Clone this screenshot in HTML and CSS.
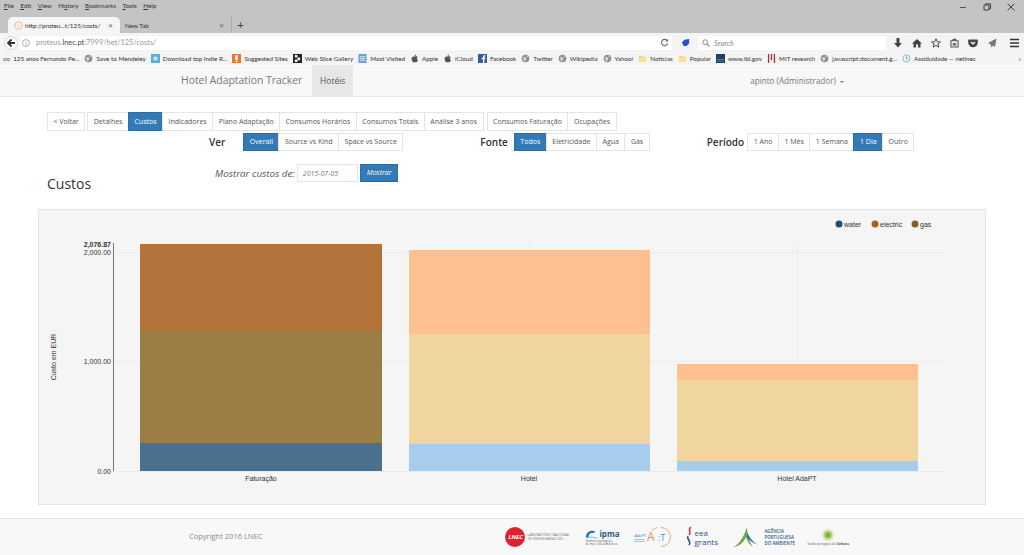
FILE: index.html
```html
<!DOCTYPE html>
<html lang="en">
<head>
    <meta charset="UTF-8">
    <title>Custos</title>
    <link rel="stylesheet" href="styles.css">
</head>
<body>
    <svg class="defs" width="0" height="0">
        <symbol id="globe" viewBox="0 0 10 10"><circle cx="5" cy="5" r="4.2" fill="#8a8f94"/><path d="M2 3.5h3l1 2-2 3-1-2zM6 1.5l2 1.5-1.500 1z" fill="#d8dcdf"/></symbol>
        <symbol id="folder" viewBox="0 0 10 10"><path d="M1 2h3l1 1h4v6H1z" fill="#f0cf6e"/><path d="M1 4h8v5H1z" fill="#f8e29a"/></symbol>
        <symbol id="apple" viewBox="0 0 10 10"><path d="M5 3c1-.7 3-.7 3.500.6-1.300.9-1 2.700.4 3.200C8.400 8.200 7.500 9.500 6.500 9.300c-.7-.2-1.200-.2-2 0C3 9.500 1.400 6.500 1.800 4.800 2.200 3 4 2.400 5 3zM5 2.600c0-1 .8-1.900 1.800-2 0 1-.8 1.900-1.800 2z" fill="#555"/></symbol>
    </svg>

    <div class="browser">
        <div class="menubar">
            <span><u>F</u>ile</span><span><u>E</u>dit</span><span><u>V</u>iew</span><span>Hi<u>s</u>tory</span><span><u>B</u>ookmarks</span><span><u>T</u>ools</span><span><u>H</u>elp</span>
            <div class="window-btns">
                <svg width="10" height="10" viewBox="0 0 10 10"><path d="M2 5.500h6" stroke="#555" stroke-width="1"/></svg>
                <svg width="10" height="10" viewBox="0 0 10 10"><path d="M2 3h5v5H2zM3.500 3V1.800h5v5H7" fill="none" stroke="#444" stroke-width="1"/></svg>
                <svg width="10" height="10" viewBox="0 0 10 10"><path d="M1.500 1.500l7 7M8.500 1.500l-7 7" stroke="#444" stroke-width="1"/></svg>
            </div>
        </div>
        <div class="tabstrip">
            <div class="tab tab-active">
                <svg width="9" height="9" viewBox="0 0 10 10"><circle cx="5" cy="5" r="4" fill="none" stroke="#f0c9a0" stroke-width="1.500"/><circle cx="5" cy="5" r="1.500" fill="#f4dcc4"/></svg>
                <span class="tab-title">http://proteu...t/125/costs/</span>
                <span class="tab-x">✕</span>
            </div>
            <div class="tab">
                <span class="tab-title">New Tab</span>
                <span class="tab-x">✕</span>
            </div>
            <span class="tab-plus">+</span>
        </div>
        <div class="toolbar">
            <svg class="back" width="14" height="14" viewBox="0 0 14 14"><circle cx="7" cy="7" r="6.500" fill="#fff" stroke="#d5d5d5"/><path d="M7.500 3.500L4 7l3.500 3.500M4.500 7H11" fill="none" stroke="#333" stroke-width="1.800"/></svg>
            <div class="urlbar">
                <svg width="8" height="8" viewBox="0 0 10 10"><circle cx="5" cy="5" r="4.300" fill="none" stroke="#999"/><path d="M5 4.500v3M5 2.500v1" stroke="#999"/></svg>
                <span class="url-text">proteus.<b>lnec.pt</b>:7999/het/125/costs/</span>
                <svg class="reload" width="9" height="9" viewBox="0 0 10 10"><path d="M8 3a3.500 3.500 0 1 0 .5 3" fill="none" stroke="#666" stroke-width="1.200"/><path d="M8.800 .8v3h-3z" fill="#666"/></svg>
            </div>
            <svg class="ext" width="9" height="9" viewBox="0 0 10 10"><path d="M1 5l3-3 5-1v5l-3 3H3z" fill="#2450c8"/></svg>
            <div class="searchbar">
                <svg width="8" height="8" viewBox="0 0 10 10"><circle cx="4" cy="4" r="3" fill="none" stroke="#888" stroke-width="1.200"/><path d="M6.500 6.500L9.500 9.500" stroke="#888" stroke-width="1.400"/></svg>
                <span>Search</span>
            </div>
            <div class="tool-icons">
                <svg width="10" height="10" viewBox="0 0 10 10"><path d="M3.500 0h3v5H9L5 9.500 1 5h2.500z" fill="#444"/></svg>
                <svg width="10" height="10" viewBox="0 0 10 10"><path d="M5 1L0 5.500h1.500V9.500h2.500V6.500h2v3h2.500V5.500H10z" fill="#444"/></svg>
                <svg width="10" height="10" viewBox="0 0 10 10"><path d="M5 .8l1.300 2.900 3.100.3-2.400 2 .8 3.100L5 7.500 2.200 9.100 3 6 .6 4l3.100-.3z" fill="none" stroke="#444"/></svg>
                <svg width="9" height="10" viewBox="0 0 10 10"><path d="M1 2.500h8v7H1zM3.500 2.500V1h3v1.500" fill="none" stroke="#555" stroke-width="1.200"/><path d="M3 5h4v3H3z" fill="#777"/></svg>
                <svg width="10" height="10" viewBox="0 0 10 10"><path d="M1 1.500h8a.8.8 0 0 1 .8.8v2.200a4.800 4.800 0 0 1-9.600 0V2.300a.8.8 0 0 1 .8-.8z" fill="#444"/><path d="M3 4l2 2 2-2" fill="none" stroke="#fff" stroke-width="1.200"/></svg>
                <svg width="10" height="10" viewBox="0 0 10 10"><path d="M9.500 .5L1 5l2.500 1.200L4.500 9.500 6 7.500l2 1.500z" fill="#777"/></svg>
                <svg class="burger" width="11" height="10" viewBox="0 0 11 10"><path d="M1 1.500h9M1 5h9M1 8.500h9" stroke="#333" stroke-width="1.600"/></svg>
            </div>
        </div>
        <div class="bookmarks">
            <span class="bm"><i class="glyph-oo">oo</i>125 anos Fernando Pe...</span>
            <span class="bm"><svg><use href="#globe"/></svg>Save to Mendeley</span>
            <span class="bm"><svg viewBox="0 0 10 10"><rect width="10" height="10" fill="#58b0d8"/><rect x="3" y="3" width="4" height="4" fill="#cfe8f4"/></svg>Download top Indie R...</span>
            <span class="bm"><svg viewBox="0 0 10 10"><rect width="10" height="10" fill="#e8792c"/><rect x="3.500" y="1.500" width="3" height="5" fill="#fff"/><rect x="4" y="7.500" width="2" height="1.500" fill="#fff"/></svg>Suggested Sites</span>
            <span class="bm"><svg viewBox="0 0 10 10"><rect width="10" height="10" fill="#222"/><path d="M2 1h3v3H2zM5 4h3v3H5zM2 6h3v3H2z" fill="#eee"/></svg>Web Slice Gallery</span>
            <span class="bm"><svg viewBox="0 0 10 10"><rect x=".5" width="9" height="10" fill="#6a9fd8"/><path d="M2 3h6M2 5h6M2 7h6" stroke="#e3effa"/></svg>Most Visited</span>
            <span class="bm"><svg><use href="#apple"/></svg>Apple</span>
            <span class="bm"><svg><use href="#apple"/></svg>iCloud</span>
            <span class="bm"><svg viewBox="0 0 10 10"><rect width="10" height="10" fill="#3b5a98"/><path d="M5.500 10V5.800H4.200V4.200h1.300V3.200C5.500 2 6.200 1.400 7.300 1.400h1v1.500h-.7c-.5 0-.6.200-.6.600v.7h1.300l-.2 1.600H7V10z" fill="#fff"/></svg>Facebook</span>
            <span class="bm"><svg><use href="#globe"/></svg>Twitter</span>
            <span class="bm"><svg><use href="#globe"/></svg>Wikipedia</span>
            <span class="bm"><svg><use href="#globe"/></svg>Yahoo!</span>
            <span class="bm"><svg><use href="#folder"/></svg>Notícias</span>
            <span class="bm"><svg><use href="#folder"/></svg>Popular</span>
            <span class="bm"><svg viewBox="0 0 10 10"><rect width="10" height="10" fill="#1c3f63"/><path d="M1 6h8M1 8h8" stroke="#5c84a8"/></svg>www.lbl.gov</span>
            <span class="bm"><svg viewBox="0 0 10 10"><path d="M1 0h1.500v10H1zM4.200 0h1.500v7H4.200zM7.500 0H9v10H7.500z" fill="#a8323c"/></svg>MIT research</span>
            <span class="bm"><svg><use href="#globe"/></svg>javascript:document.g...</span>
            <span class="bm"><svg viewBox="0 0 10 10"><circle cx="5" cy="5" r="4" fill="#e8f3f6" stroke="#8cb4c0"/><path d="M5 2.500V5l2 1" fill="none" stroke="#7a9aa4"/></svg>Assiduidade — netlnec</span>
            <span class="bm-more">»</span>
        </div>
    </div>

    <nav class="navbar">
        <span class="brand">Hotel Adaptation Tracker</span>
        <span class="nav-active">Hotéis</span>
        <span class="user">apinto (Administrador) <i class="caret"></i></span>
    </nav>

    <div class="content">
        <div class="btn-row">
            <a class="btn">&lt; Voltar</a>
            <div class="btn-group">
                <a class="btn">Detalhes</a>
                <a class="btn active">Custos</a>
                <a class="btn">Indicadores</a>
                <a class="btn">Plano Adaptação</a>
                <a class="btn">Consumos Horários</a>
                <a class="btn">Consumos Totais</a>
                <a class="btn">Análise 3 anos</a>
            </div>
            <div class="btn-group">
                <a class="btn">Consumos Faturação</a>
                <a class="btn">Ocupações</a>
            </div>
        </div>

        <div class="filter-row">
            <div class="filter filter-ver">
                <span class="filter-label">Ver</span>
                <div class="btn-group">
                    <a class="btn active">Overall</a>
                    <a class="btn">Source vs Kind</a>
                    <a class="btn">Space vs Source</a>
                </div>
            </div>
            <div class="filter filter-fonte">
                <span class="filter-label">Fonte</span>
                <div class="btn-group">
                    <a class="btn active">Todos</a>
                    <a class="btn">Eletricidade</a>
                    <a class="btn">Água</a>
                    <a class="btn">Gás</a>
                </div>
            </div>
            <div class="filter filter-periodo">
                <span class="filter-label">Período</span>
                <div class="btn-group">
                    <a class="btn">1 Ano</a>
                    <a class="btn">1 Mês</a>
                    <a class="btn">1 Semana</a>
                    <a class="btn active">1 Dia</a>
                    <a class="btn">Outro</a>
                </div>
            </div>
        </div>

        <div class="date-row">
            <em>Mostrar custos de:</em>
            <input class="date-input" value="2015-07-05">
            <a class="btn active btn-show">Mostrar</a>
        </div>

        <h2 class="title">Custos</h2>

        <div class="well">
            <svg class="chart" width="946" height="294" viewBox="39 210 946 294">
                <g class="grid">
                    <path d="M113 252.500H945M113 361.500H945M113 471.500H945"/>
                    <path d="M261.500 243V471M529.500 243V471M797.500 243V471"/>
                </g>
                <rect x="140" y="244" width="242" height="87" fill="#b5733c"/>
                <rect x="140" y="331" width="242" height="112" fill="#9a7e45"/>
                <rect x="140" y="443" width="242" height="28" fill="#4a7090"/>
                <rect x="409" y="250" width="241" height="84" fill="#fec08f"/>
                <rect x="409" y="334" width="241" height="110" fill="#f0d69e"/>
                <rect x="409" y="444" width="241" height="27" fill="#a6cdee"/>
                <rect x="677" y="364" width="241" height="16" fill="#fec08f"/>
                <rect x="677" y="380" width="241" height="81" fill="#f0d69e"/>
                <rect x="677" y="461" width="241" height="10" fill="#a6cdee"/>
                <path class="axis" d="M113.500 243V471"/>
                <g class="tick" text-anchor="end">
                    <text x="111" y="247" class="tick-max">2,076.87</text>
                    <text x="111" y="255">2,000.00</text>
                    <text x="111" y="364">1,000.00</text>
                    <text x="111" y="474">0.00</text>
                </g>
                <g class="tick" text-anchor="middle">
                    <text x="261" y="481">Faturação</text>
                    <text x="529" y="481">Hotel</text>
                    <text x="797" y="481">Hotel AdaPT</text>
                </g>
                <text class="tick" transform="rotate(-90 56 357)" x="56" y="357" text-anchor="middle">Custo em EUR</text>
                <g class="tick">
                    <circle cx="839" cy="224" r="3.500" fill="#1f4e79"/><text x="844" y="227">water</text>
                    <circle cx="875" cy="224" r="3.500" fill="#b35c14"/><text x="880" y="227">electric</text>
                    <circle cx="915" cy="224" r="3.500" fill="#7f6320"/><text x="920" y="227">gas</text>
                </g>
            </svg>
        </div>
    </div>

    <footer class="footer">
        <span class="copyright">Copyright 2016 LNEC</span>
        <div class="logos">
            <div class="logo logo-lnec">
                <svg width="20" height="20" viewBox="0 0 20 20"><circle cx="10" cy="10" r="10" fill="#e0202e"/></svg>
                <span class="lnec-mark">LNEC</span>
                <span class="logo-small">LABORATÓRIO NACIONAL<br>DE ENGENHARIA CIVIL</span>
            </div>
            <div class="logo logo-ipma">
                <div class="ipma-top">
                    <svg width="14" height="12" viewBox="0 0 16 12"><path d="M1 10C1 4 6 1 12 3L9 5C6 4 4 6 4 10z" fill="#1b76b8"/><path d="M2 11c3-2 6-2 12 0" fill="none" stroke="#6db3dc"/></svg>
                    <span class="ipma-name">ipma</span>
                </div>
                <span class="logo-tiny">instituto português<br>do mar e da atmosfera</span>
            </div>
            <div class="logo logo-act">
                <div class="act-left">
                    <span class="act-small">AdaPT</span>
                    <i class="act-line"></i>
                    <i class="act-line"></i>
                </div>
                <svg width="26" height="22" viewBox="0 0 26 22"><path d="M15 1.500a9.500 9.500 0 0 1 0 19" fill="none" stroke="#f0a080"/><path d="M11 1.500a9.500 9.500 0 0 0-5 3" fill="none" stroke="#f0a080"/><text x="1" y="15" class="act-a">A</text><text x="12" y="15" class="act-t">:T</text></svg>
            </div>
            <div class="logo logo-eea">
                <svg width="7" height="22" viewBox="0 0 7 22"><path d="M5 1C1 4 6 6 3 9" fill="none" stroke="#d0304c" stroke-width="1.500"/><path d="M2 10c-2 3 4 5 1 9" fill="none" stroke="#2a4f88" stroke-width="1.500"/></svg>
                <span class="eea-name">eea<br>grants</span>
            </div>
            <div class="logo logo-apa">
                <svg width="28" height="22" viewBox="0 0 28 22"><path d="M1 21C8 18 12 10 15 1c0 8 2 14 6 20-4-3-6-6-7-10-2 5-6 9-13 10z" fill="#6cab3c"/><path d="M15 6c2 5 5 9 11 13-5-2-9-5-11-8z" fill="#2a6ab0"/></svg>
                <span class="apa-name">AGÊNCIA<br>PORTUGUESA<br>DO AMBIENTE</span>
            </div>
            <div class="logo logo-carbono">
                <svg width="14" height="14" viewBox="0 0 14 14"><circle cx="7" cy="7" r="6.500" fill="#e3f0cf"/><circle cx="7" cy="7" r="4.500" fill="#b5d585"/><circle cx="7" cy="7" r="2.500" fill="#7fb040"/></svg>
                <span class="logo-tiny">Fundo português de <b>Carbono</b></span>
            </div>
        </div>
    </footer>
</body>
</html>
```
FILE: styles.css
```css
body {
    font-family: 'Open Sans', sans-serif;
    background: #fff;
    color: #333;
    margin: 0;
    height: 555px;
    overflow: hidden;
    display: flex;
    flex-direction: column;
}

.defs {
    position: absolute;
}

/* browser window */
.browser {
    height: 65px;
    font-family: 'Lato', sans-serif;
    background: #c4c4c4;
}

.menubar {
    height: 17px;
    display: flex;
    gap: 6.500px;
    padding: 0 4px;
    font-size: 6.300px;
    line-height: 11px;
    color: #333;
}

.window-btns {
    margin-left: auto;
    display: flex;
    gap: 14px;
    padding: 2px 4px 0 0;
}

.tabstrip {
    height: 16px;
    display: flex;
    align-items: stretch;
    padding-left: 8px;
    font-size: 6.300px;
}

.tab {
    width: 112px;
    display: flex;
    align-items: center;
    gap: 2px;
    padding: 0 7px 0 6px;
    box-sizing: border-box;
    color: #333;
}

.tab svg {
    flex-shrink: 0;
}

.tab-active {
    background: #f5f5f5;
    border-radius: 5px 5px 0 0;
}

.tab:not(.tab-active) {
    padding-left: 5px;
    border-right: 1px solid #aaa;
}

.tab-x {
    margin-left: auto;
    color: #666;
    font-size: 6px;
}

.tab-plus {
    margin-left: 5px;
    font-size: 12px;
    line-height: 15px;
    color: #444;
}

.toolbar {
    height: 19px;
    background: #f4f4f4;
    display: flex;
    align-items: center;
    padding-left: 4px;
}

.urlbar {
    width: 652px;
    height: 14px;
    background: #fff;
    margin-left: 2px;
    display: flex;
    align-items: center;
    gap: 6px;
    padding-left: 2px;
    box-sizing: border-box;
    font-size: 7.400px;
    color: #999;
}

.url-text b {
    font-weight: 400;
    color: #444;
}

.reload {
    margin-left: auto;
    margin-right: 3px;
}

.ext {
    margin-left: 9px;
}

.searchbar {
    width: 188px;
    height: 14px;
    background: #fff;
    margin-left: 8px;
    display: flex;
    align-items: center;
    gap: 4px;
    padding-left: 4px;
    box-sizing: border-box;
    font-size: 7px;
    font-style: italic;
    color: #888;
}

.tool-icons {
    display: flex;
    align-items: center;
    gap: 9px;
    margin-left: 7px;
}

.burger {
    margin-left: 3px;
}

.bookmarks {
    height: 13px;
    background: #f4f4f4;
    display: flex;
    align-items: center;
    gap: 5px;
    padding-left: 3px;
    font-size: 6.300px;
    color: #333;
    white-space: nowrap;
}

.bm {
    display: flex;
    align-items: center;
    gap: 3px;
}

.bm svg {
    width: 9px;
    height: 9px;
}

.glyph-oo {
    font-style: normal;
    color: #555;
}

.bm-more {
    margin-left: auto;
    padding-right: 3px;
    color: #666;
}

/* app navbar */
.navbar {
    height: 31px;
    background: #f8f8f8;
    border-bottom: 1px solid #e7e7e7;
    display: flex;
    align-items: stretch;
    padding-left: 181px;
    color: #777;
    box-sizing: content-box;
}

.brand {
    font-size: 10.400px;
    line-height: 31px;
}

.nav-active {
    width: 41px;
    margin-left: 10px;
    background: #e7e7e7;
    font-size: 8.500px;
    line-height: 31px;
    text-align: center;
    color: #555;
}

.user {
    margin-left: auto;
    margin-right: 180px;
    font-size: 8.150px;
    line-height: 31px;
}

.caret {
    display: inline-block;
    margin-left: 2px;
    vertical-align: middle;
    border-top: 2px solid #777;
    border-left: 2px solid transparent;
    border-right: 2px solid transparent;
}

/* page content */
.content {
    flex: 1;
    padding: 15px 38px 0;
}

.btn-row {
    display: flex;
    gap: 2px;
    padding-left: 9px;
}

.btn-group {
    display: flex;
}

.btn-group + .btn-group {
    margin-left: 1px;
}

.btn {
    height: 19px;
    box-sizing: border-box;
    padding: 0 5.500px;
    background: #fff;
    border: 1px solid #e4e4e4;
    font-size: 7px;
    line-height: 17px;
    color: #555;
    white-space: nowrap;
}

.btn-group .btn + .btn {
    margin-left: -1px;
}

.btn.active {
    background: #337ab7;
    border-color: #2e6da4;
    color: #fff;
}

.filter-row {
    display: flex;
    margin-top: 1px;
    height: 19px;
}

.filter {
    display: flex;
    align-items: center;
}

.filter .btn {
    height: 18px;
    line-height: 16px;
}

.filter-label {
    font-size: 10px;
    font-weight: 600;
    color: #333;
}

.filter-ver {
    padding-left: 171px;
    gap: 18px;
}

.filter-fonte {
    padding-left: 77px;
    gap: 6px;
}

.filter-periodo {
    padding-left: 57px;
    gap: 3px;
}

.date-row {
    display: flex;
    align-items: center;
    margin-top: 13px;
    padding-left: 177px;
    gap: 2px;
}

.date-row em {
    font-size: 9.800px;
    color: #555;
}

.date-input {
    width: 61px;
    height: 18px;
    box-sizing: border-box;
    padding: 0 5px;
    border: 1px solid #e4e4e4;
    font-family: inherit;
    font-size: 7px;
    font-style: italic;
    color: #777;
}

.btn-show {
    font-style: italic;
    height: 18px;
    line-height: 16px;
    padding: 0 6px;
}

.title {
    margin: -8px 0 0 9px;
    font-size: 14px;
    font-weight: 400;
    line-height: 20px;
    color: #333;
}

.well {
    margin-top: 15px;
    width: 948px;
    height: 296px;
    box-sizing: border-box;
    background: #f5f5f5;
    border: 1px solid #e3e3e3;
}

.chart {
    display: block;
}

.grid path {
    stroke: #ececec;
    fill: none;
}

.axis {
    stroke: #777;
    fill: none;
}

.tick {
    font-family: 'Liberation Sans', sans-serif;
    font-size: 7px;
    fill: #333;
}

.tick-max {
    font-weight: 700;
}

/* footer */
.footer {
    height: 37px;
    box-sizing: border-box;
    background: #f8f8f8;
    border-top: 1px solid #e7e7e7;
    display: flex;
    align-items: center;
    padding-left: 189px;
    margin-top: 13px;
}

.copyright {
    font-size: 7.500px;
    color: #888;
    padding-bottom: 3px;
}

.logos {
    display: flex;
    align-items: center;
    margin-left: 243px;
}

.logo {
    display: flex;
    align-items: center;
    position: relative;
}

.logo-lnec {
    width: 80px;
    gap: 2px;
}

.lnec-mark {
    position: absolute;
    left: 3px;
    top: 6px;
    font-size: 6px;
    font-style: italic;
    font-weight: 700;
    color: #fff;
}

.logo-small {
    font-size: 3.500px;
    line-height: 4px;
    color: #777;
}

.logo-ipma {
    width: 49px;
    flex-direction: column;
    align-items: flex-start;
}

.ipma-top {
    display: flex;
    align-items: center;
}

.ipma-name {
    font-size: 8px;
    line-height: 10px;
    font-weight: 700;
    color: #2a5a80;
}

.logo-act {
    width: 52px;
    gap: 1px;
}

.act-left {
    width: 11px;
    display: flex;
    flex-direction: column;
    gap: 1px;
}

.act-small {
    font-size: 4px;
    line-height: 5px;
    color: #2a7ab8;
}

.act-line {
    height: 1px;
    background: #9cc8e4;
}

.act-a {
    font-size: 12px;
    fill: #ef8a6a;
}

.act-t {
    font-size: 9px;
    fill: #3a9ac8;
}

.logo-eea {
    width: 46px;
    gap: 1px;
}

.eea-name {
    font-size: 8px;
    line-height: 9px;
    color: #2a4f88;
}

.logo-apa {
    width: 75px;
    gap: 4px;
}

.apa-name {
    font-size: 4.500px;
    line-height: 6px;
    font-weight: 600;
    color: #2a5a88;
}

.logo-carbono {
    flex-direction: column;
    gap: 1px;
}

.logo-tiny {
    font-size: 3px;
    line-height: 3.500px;
    white-space: nowrap;
    color: #555;
}
```
